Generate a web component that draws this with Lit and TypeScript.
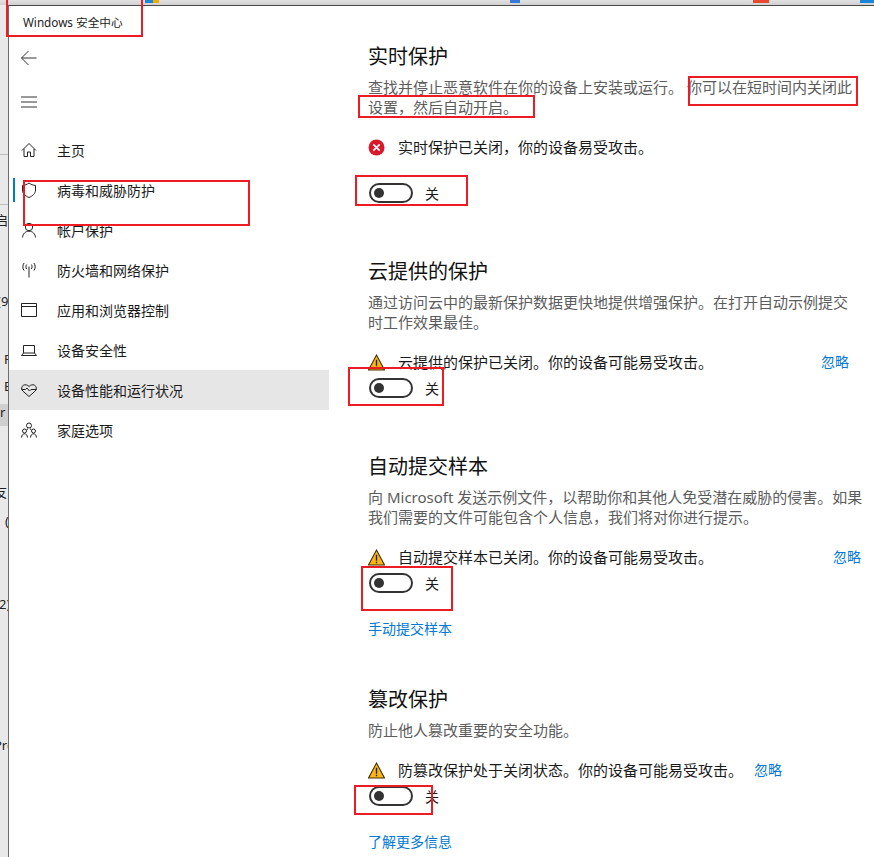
import { LitElement, html, css, svg } from "lit";
import { customElement } from "lit/decorators.js";

const navIcons: Record<string, unknown> = {
  home: svg`<path d="M1 8.500 8 1.500l7 7M3 7v7.500h3.500v-4.500h3v4.500H13V7"/>`,
  shield: svg`<path d="M8 1c2 1.500 4.200 2.300 6.500 2.400v4.600c0 3.500-2.500 5.800-6.500 7.500C4 13.800 1.500 11.500 1.500 8V3.400C3.800 3.300 6 2.500 8 1z"/>`,
  user: svg`<circle cx="8" cy="5" r="3.700"/><path d="M1.500 15.500c.3-3.900 3-6.300 6.500-6.300s6.200 2.400 6.500 6.300"/>`,
  wifi: svg`<path d="M8 4.500v11M5.700 2.500c-1 1.300-1 3.300 0 4.600M10.300 2.500c1 1.300 1 3.300 0 4.600M3.100 1c-1.700 2.200-1.700 5.500 0 7.600M12.900 1c1.700 2.200 1.700 5.500 0 7.600"/>`,
  browser: svg`<path d="M.5 1.500h15v13H.5zM.5 4.500h15"/>`,
  laptop: svg`<path d="M2.500 3.500h11v7.500h-11zM.5 13.500h15M2.500 11l-2 2.500M13.500 11l2 2.500"/>`,
  heart: svg`<path d="M8 14.500 1.800 9C.1 7.300.3 4.500 2.300 3.300c1.900-1.100 4.100-.5 5.700 1.200 1.600-1.700 3.800-2.300 5.700-1.200 2 1.200 2.200 4 .5 5.700zM.5 7.500h4L6 6l2.500 3L10 7.500h5.500"/>`,
  family: svg`<circle cx="8" cy="3.500" r="2.500"/><circle cx="3.500" cy="9" r="2"/><circle cx="12.500" cy="9" r="2"/><path d="M.5 15.500c.2-2.200 1.300-3.700 3-3.700s2.800 1.500 3 3.700M9.500 15.500c.2-2.200 1.300-3.700 3-3.700s2.800 1.500 3 3.700M6.500 6.500 6 8M9.500 6.500 10 8"/>`,
};

const navItems = [
  { icon: "home", label: "主页" },
  { icon: "shield", label: "病毒和威胁防护", marked: true },
  { icon: "user", label: "帐户保护" },
  { icon: "wifi", label: "防火墙和网络保护" },
  { icon: "browser", label: "应用和浏览器控制" },
  { icon: "laptop", label: "设备安全性" },
  { icon: "heart", label: "设备性能和运行状况", active: true },
  { icon: "family", label: "家庭选项" },
];

const sections = [
  {
    title: "实时保护",
    desc: html`查找并停止恶意软件在你的设备上安装或运行。 你可以在短时间内关闭此<br />设置，然后自动开启。`,
    level: "error",
    status: "实时保护已关闭，你的设备易受攻击。",
    ignoreGap: null,
    roomy: true,
  },
  {
    title: "云提供的保护",
    desc: html`通过访问云中的最新保护数据更快地提供增强保护。在打开自动示例提交<br />时工作效果最佳。`,
    level: "warn",
    status: "云提供的保护已关闭。你的设备可能易受攻击。",
    ignoreGap: 108,
  },
  {
    title: "自动提交样本",
    desc: html`向 Microsoft 发送示例文件，以帮助你和其他人免受潜在威胁的侵害。如果<br />我们需要的文件可能包含个人信息，我们将对你进行提示。`,
    level: "warn",
    status: "自动提交样本已关闭。你的设备可能易受攻击。",
    ignoreGap: 120,
    link: "手动提交样本",
  },
  {
    title: "篡改保护",
    desc: html`防止他人篡改重要的安全功能。`,
    level: "warn",
    status: "防篡改保护处于关闭状态。你的设备可能易受攻击。",
    ignoreGap: 11,
    link: "了解更多信息",
  },
];

const marks = [
  { x: 6, y: -4, w: 137, h: 41 },
  { x: 23, y: 180, w: 227, h: 46 },
  { x: 688, y: 76, w: 170, h: 30 },
  { x: 358, y: 95, w: 177, h: 23 },
  { x: 355, y: 175, w: 113, h: 31 },
  { x: 348, y: 367, w: 96, h: 39 },
  { x: 361, y: 566, w: 92, h: 45 },
  { x: 354, y: 785, w: 79, h: 30 },
];

const behindLeft = [
  { t: "启", y: 212, i: -5 },
  { t: "(9", y: 293, i: -3 },
  { t: "F", y: 351, i: 4 },
  { t: "E", y: 378, i: 4 },
  { t: "r A", y: 404, i: 0, sel: true },
  { t: "友", y: 484, i: -6 },
  { t: "(", y: 513, i: 5 },
  { t: "2)", y: 596, i: -1 },
  { t: "Pro", y: 737, i: -6 },
];

const taskbar = [
  { x: 145, w: 8, c: "#1a86d9" },
  { x: 153, w: 6, c: "#f0ab00" },
  { x: 510, w: 10, c: "#3a78d8" },
  { x: 753, w: 16, c: "#e9492c" },
  { x: 860, w: 14, c: "#1a86d9" },
];

@customElement("app-root")
export class AppRoot extends LitElement {
  static styles = css`
    :host {
      display: block;
      position: relative;
      width: 874px;
      height: 857px;
      overflow: hidden;
      background: #e9e9e9;
      font-family: "Noto Sans", "Noto Sans CJK SC", sans-serif;
      color: #1a1a1a;
    }
    .behind { position: absolute; inset: 0; overflow: hidden; }
    .topbar {
      position: absolute; left: 0; right: 0; top: 0; height: 5px;
      background: linear-gradient(#e2e2e2, #cfcfcf);
    }
    .swatch { position: absolute; top: 0; height: 3px; }
    .bt {
      position: absolute; left: 0; width: 9px; height: 20px; overflow: hidden;
      font-size: 13px; line-height: 16px; white-space: nowrap; color: #222;
    }
    .bt.sel { background: #cfcfcf; height: 22px; }
    .hr { position: absolute; left: 0; width: 9px; height: 1px; background: #bdbdbd; }
    .window {
      position: absolute; left: 8px; top: 5px; right: 0; bottom: 0;
      display: flex; background: #fff;
      border-left: 1px solid #6d6d6d; border-top: 1px solid #4a4a4a;
    }
    .side { width: 320px; flex: none; display: flex; flex-direction: column; }
    .apptitle { height: 33px; padding-left: 14px; font-size: 11.7px; line-height: 33px; color: #222; }
    .toolbtn { height: 40px; padding-left: 12px; display: flex; align-items: center; flex: none; }
    .toolbtn svg { width: 16px; height: 16px; fill: none; stroke: #333; stroke-width: 1; }
    .back { margin-top: -1px; }
    .burger { margin-top: 4px; margin-bottom: 8px; }
    .nav { display: flex; flex-direction: column; }
    .item {
      position: relative; height: 40px; padding-left: 12px; display: flex; align-items: center;
      gap: 20px; font-size: 14px; color: #1a1a1a;
    }
    .item svg { width: 16px; height: 16px; fill: none; stroke: #222; stroke-width: 1; flex: none; }
    .item.active { background: #e6e6e6; }
    .item.marked::before {
      content: ""; position: absolute; left: 4px; top: 8px; width: 2px; height: 24px; background: #0078d7;
    }
    .main { flex: 1; padding: 37px 0 0 39px; min-width: 0; }
    section { margin-bottom: 55px; }
    section.haslink { margin-bottom: 47px; }
    h2 { margin: 0; font-size: 20px; font-weight: 400; line-height: 28px; color: #111; }
    .desc { margin: 6px 0 0; font-size: 15px; line-height: 20px; color: #5c5c5c; white-space: nowrap; }
    .status { display: flex; align-items: center; height: 20px; margin-top: 20px; font-size: 15px; line-height: 20px; color: #1a1a1a; white-space: nowrap; }
    .status svg { width: 17px; height: 17px; margin-left: 0; margin-right: 13px; flex: none; }
    .ignore { color: #0078d7; font-size: 14px; }
    .toggle-row { display: flex; align-items: center; gap: 12px; height: 20px; margin-top: 6px; font-size: 14px; color: #1a1a1a; }
    .toggle-row.roomy { margin-top: 26px; }
    .toggle { width: 44px; height: 20px; box-sizing: border-box; border: 2px solid #333; border-radius: 10px; padding: 3px; margin-left: 1px; }
    .knob { width: 10px; height: 10px; border-radius: 50%; background: #333; }
    .link { display: block; margin-top: 26px; height: 20px; line-height: 20px; font-size: 14px; color: #0078d7; }
    .mark { position: absolute; box-sizing: border-box; border: 2px solid #ed1c24; }
  `;

  private statusIcon(level: string) {
    if (level === "error") {
      return html`<svg viewBox="0 0 16 16"><circle cx="8" cy="8" r="7.500" fill="#d9182a"/><path d="M5 5l6 6M11 5l-6 6" stroke="#fff" stroke-width="1.500" fill="none"/></svg>`;
    }
    return html`<svg viewBox="0 0 16 16"><path d="M8 1 15.500 15H.5z" fill="#fcb614" stroke="#3d3000" stroke-width="1"/><path d="M8 5.500v5.500M8 12v1.500" stroke="#222" stroke-width="1.300" fill="none"/></svg>`;
  }

  render() {
    return html`
      <div class="behind">
        <div class="topbar">
          ${taskbar.map((s) => html`<span class="swatch" style="left:${s.x}px;width:${s.w}px;background:${s.c}"></span>`)}
        </div>
        <div class="hr" style="top:154px"></div>
        <div class="hr" style="top:204px"></div>
        ${behindLeft.map((b) => html`<div class="bt ${b.sel ? "sel" : ""}" style="top:${b.y}px;text-indent:${b.i}px">${b.t}</div>`)}
      </div>
      <div class="window">
        <div class="side">
          <div class="apptitle">Windows 安全中心</div>
          <div class="toolbtn back">
            <svg viewBox="0 0 16 16"><path d="M.5 8h15M7.500 1 .5 8l7 7"/></svg>
          </div>
          <div class="toolbtn burger">
            <svg viewBox="0 0 16 16"><path d="M0 3h16M0 8h16M0 13h16"/></svg>
          </div>
          <nav class="nav">
            ${navItems.map(
              (n) => html`<div class="item ${n.active ? "active" : ""} ${n.marked ? "marked" : ""}">
                <svg viewBox="0 0 16 16">${navIcons[n.icon]}</svg><span>${n.label}</span>
              </div>`
            )}
          </nav>
        </div>
        <div class="main">
          ${sections.map(
            (s) => html`<section class="${s.link ? "haslink" : ""}">
              <h2>${s.title}</h2>
              <p class="desc">${s.desc}</p>
              <div class="status">
                ${this.statusIcon(s.level)}<span>${s.status}</span>
                ${s.ignoreGap !== null
                  ? html`<span class="ignore" style="margin-left:${s.ignoreGap}px">忽略</span>`
                  : ""}
              </div>
              <div class="toggle-row ${s.roomy ? "roomy" : ""}">
                <div class="toggle"><div class="knob"></div></div><span>关</span>
              </div>
              ${s.link ? html`<a class="link">${s.link}</a>` : ""}
            </section>`
          )}
        </div>
      </div>
      ${marks.map((m) => html`<div class="mark" style="left:${m.x}px;top:${m.y}px;width:${m.w}px;height:${m.h}px"></div>`)}
    `;
  }
}
